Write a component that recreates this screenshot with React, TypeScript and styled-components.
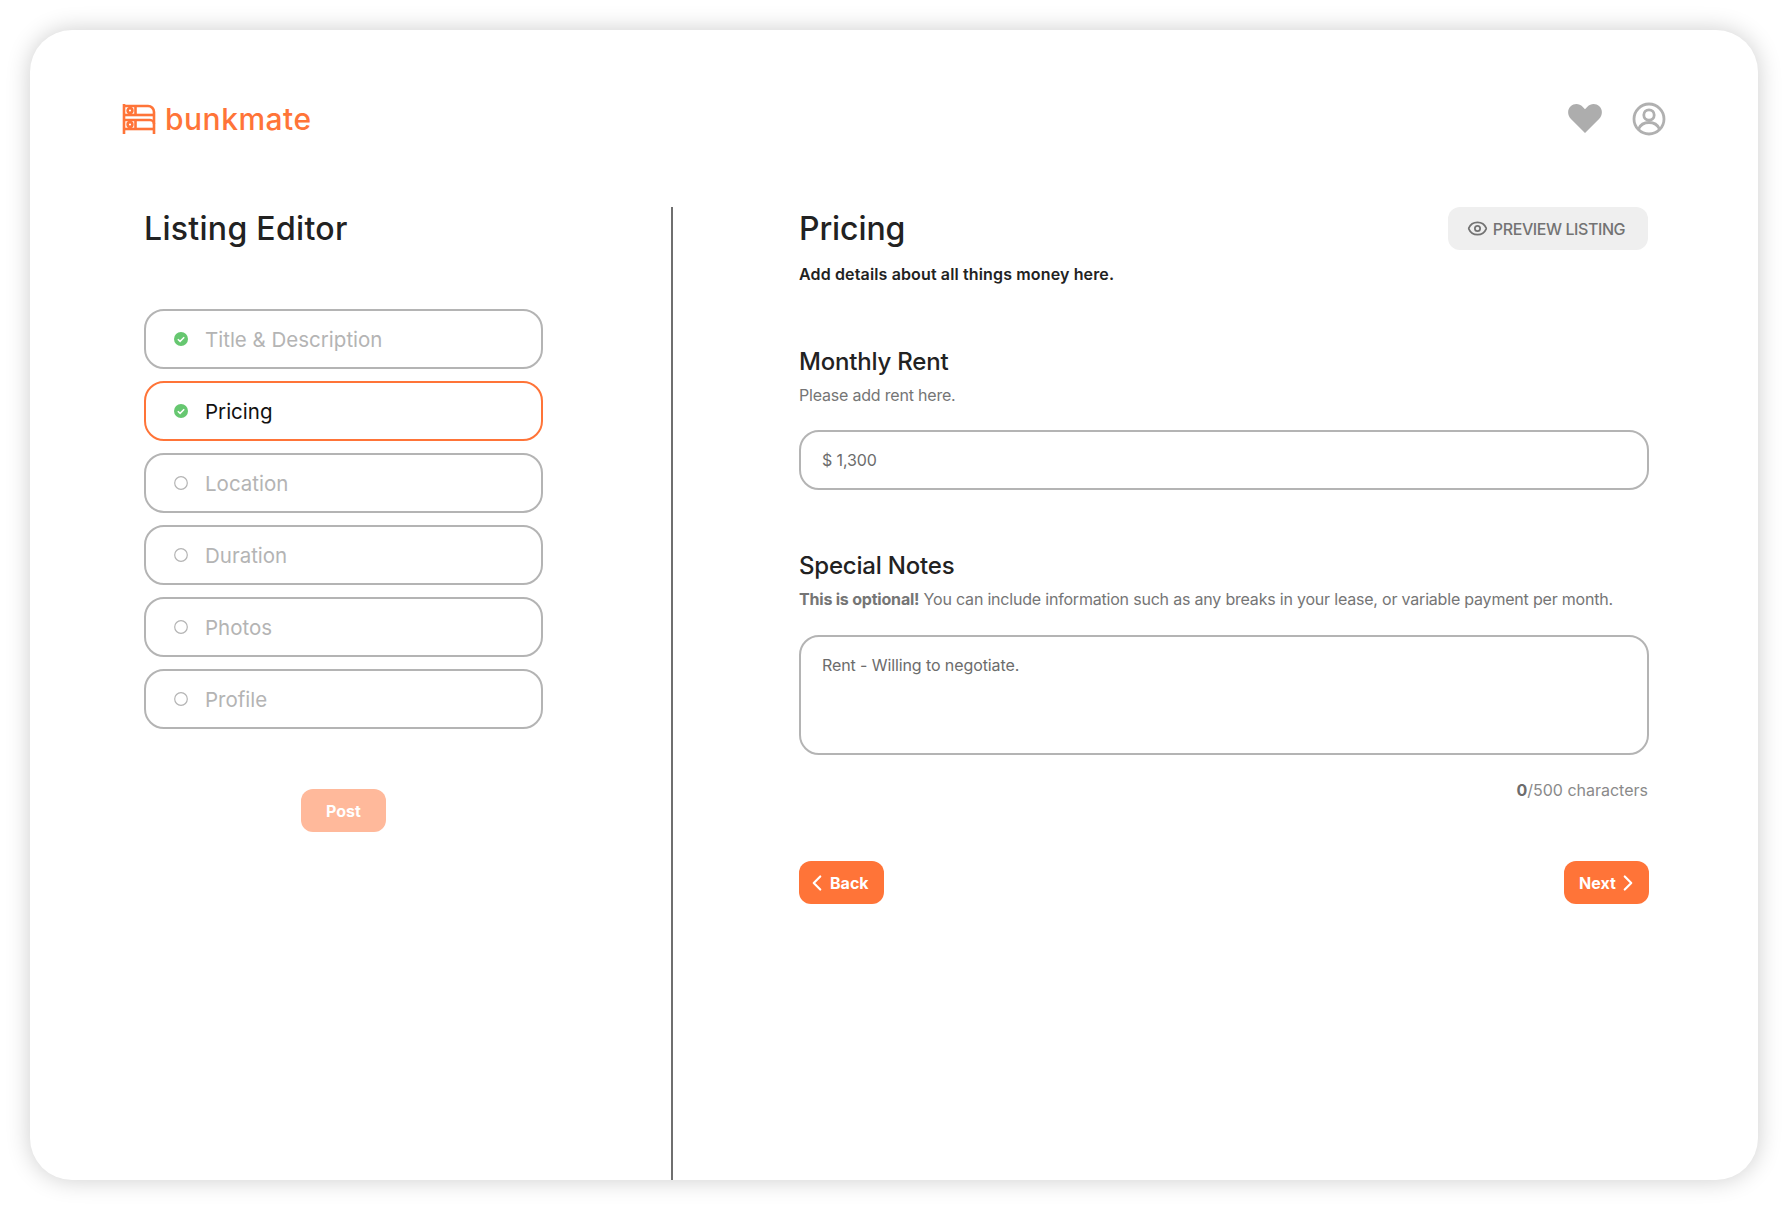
import styled, { createGlobalStyle } from "styled-components";
import { ChevronLeft, ChevronRight, Eye } from "lucide-react";

const FONT = `"Inter", "Noto Sans", sans-serif`;
const ORANGE = "#ff7438";

const GlobalStyle = createGlobalStyle`
  html, body {
    margin: 0;
    padding: 0;
    background: #fff;
  }
  * {
    box-sizing: border-box;
  }
`;

const Page = styled.div`
  width: 1788px;
  height: 1210px;
  padding: 30px;
  font-family: ${FONT};
  background: #fff;
`;

const Card = styled.div`
  display: flex;
  flex-direction: column;
  width: 1728px;
  height: 1150px;
  border-radius: 42px;
  background: #fff;
  box-shadow: 0 0 24px rgba(0, 0, 0, 0.2);
`;

const Header = styled.header`
  display: flex;
  align-items: center;
  justify-content: space-between;
  height: 177px;
  flex-shrink: 0;
  padding: 0 92px;
`;

const Logo = styled.div`
  display: flex;
  align-items: center;
  gap: 9px;
  color: ${ORANGE};
  font-size: 30px;
  font-weight: 500;
  letter-spacing: 0.5px;
`;

const HeaderIcons = styled.div`
  display: flex;
  align-items: center;
  gap: 30px;
`;

const Main = styled.main`
  display: flex;
  flex: 1;
  min-height: 0;
`;

const Sidebar = styled.aside`
  width: 643px;
  flex-shrink: 0;
  padding: 0 128px 0 114px;
  border-right: 2px solid #6f6f6f;
`;

const Title = styled.h1`
  margin: 0;
  height: 43px;
  font-size: 32px;
  line-height: 43px;
  font-weight: 500;
  letter-spacing: -0.1px;
  color: #222;
`;

const SidebarTitle = styled(Title)`
  letter-spacing: 0.3px;
`;

const Steps = styled.div`
  display: flex;
  flex-direction: column;
  gap: 12px;
  margin-top: 59px;
`;

const Step = styled.div<{ $active?: boolean }>`
  display: flex;
  align-items: center;
  gap: 17px;
  height: 60px;
  padding: 0 28px;
  border: 2px solid ${({ $active }) => ($active ? ORANGE : "#b4b4b4")};
  border-radius: 20px;
  font-size: 20.5px;
  color: ${({ $active }) => ($active ? "#111" : "#b4b4b4")};
`;

const PostRow = styled.div`
  display: flex;
  justify-content: center;
  margin-top: 60px;
`;

const Button = styled.button<{ $faded?: boolean; $pad?: string }>`
  display: flex;
  align-items: center;
  justify-content: ${({ $pad }) => ($pad ? "flex-start" : "center")};
  width: 85px;
  height: 43px;
  padding: ${({ $pad }) => $pad ?? "0"};
  border: none;
  border-radius: 12px;
  background: ${({ $faded }) => ($faded ? "#ffb99b" : ORANGE)};
  color: #fff;
  font-family: ${FONT};
  font-size: 16px;
  font-weight: 700;

  svg {
    flex-shrink: 0;
  }
`;

const NextChevron = styled(ChevronRight)`
  margin-left: -1px;
`;

const Content = styled.section`
  flex: 1;
  padding: 0 109px 0 126px;
`;

const TitleRow = styled.div`
  display: flex;
  align-items: center;
  justify-content: space-between;
  height: 43px;
`;

const PreviewButton = styled.button`
  display: flex;
  align-items: center;
  justify-content: center;
  gap: 5px;
  width: 200px;
  height: 43px;
  margin-right: 1px;
  padding: 0 4px 0 0;
  border: none;
  border-radius: 12px;
  background: #efefef;
  color: #737373;
  font-family: ${FONT};
  font-size: 16px;
  font-weight: 500;
  letter-spacing: -0.42px;
`;

const Subtitle = styled.p`
  margin: 13px 0 0;
  font-size: 16px;
  line-height: 22px;
  font-weight: 600;
  letter-spacing: 0.14px;
  color: #222;
`;

const SectionTitle = styled.h2<{ $top: number }>`
  margin: ${({ $top }) => $top}px 0 0;
  font-size: 24px;
  line-height: 32px;
  font-weight: 500;
  letter-spacing: -0.2px;
  color: #222;
`;

const Hint = styled.p`
  margin: 7px 0 0;
  font-size: 16px;
  line-height: 20px;
  letter-spacing: -0.2px;
  color: #757575;

  b {
    font-weight: 700;
  }
`;

const Field = styled.div<{ $tall?: boolean }>`
  display: flex;
  align-items: ${({ $tall }) => ($tall ? "flex-start" : "center")};
  height: ${({ $tall }) => ($tall ? "120px" : "60px")};
  margin-top: ${({ $tall }) => ($tall ? "26px" : "25px")};
  padding: ${({ $tall }) => ($tall ? "17px 21px 0" : "0 21px")};
  border: 2px solid #b4b4b4;
  border-radius: 20px;
  font-size: 16px;
  line-height: 22px;
  letter-spacing: -0.1px;
  color: #6c6c6c;
`;

const Count = styled.div`
  margin-top: 25px;
  padding-right: 1px;
  text-align: right;
  font-size: 16px;
  line-height: 20px;
  color: #8a8a8a;

  b {
    color: #6c6c6c;
    font-weight: 700;
  }
`;

const Actions = styled.div`
  display: flex;
  justify-content: space-between;
  margin-top: 61px;
`;

function BunkIcon() {
  return (
    <svg width="34" height="32" viewBox="0 0 34 32" fill="none" stroke={ORANGE} strokeWidth="2.600">
      <path d="M2 1v30" />
      <path d="M32 9v22" />
      <path d="M2 3H26a6 6 0 0 1 6 6" />
      <path d="M2 12H32" />
      <path d="M2 17H28a4 4 0 0 1 4 4" />
      <path d="M2 26H32" />
      <path d="M13.500 3v9" />
      <path d="M13.500 17v9" />
      <circle cx="8" cy="7.500" r="2.400" />
      <circle cx="8" cy="21.500" r="2.400" />
    </svg>
  );
}

function HeartIcon() {
  return (
    <svg width="34" height="29" viewBox="0 0 35 30" fill="#adadad">
      <path d="M17.500 30 3 15.500C-1 11.500-.8 5.500 2.700 2.300 6.300-.9 11.800-.6 15 2.800l2.500 2.700L20 2.800c3.200-3.400 8.700-3.700 12.300-.5 3.500 3.200 3.700 9.200-.3 13.200L17.500 30Z" />
    </svg>
  );
}

function UserIcon() {
  return (
    <svg width="34" height="34" viewBox="0 0 34 34" fill="none" stroke="#b0b0b0" strokeWidth="2.800">
      <circle cx="17" cy="17" r="15" />
      <circle cx="17" cy="13" r="5.200" />
      <path d="M6.500 27c2-4.500 6-6.500 10.500-6.500S25.500 22.500 27.500 27" />
    </svg>
  );
}

function StepIcon({ done }: { done?: boolean }) {
  if (!done) {
    return (
      <svg width="14" height="14" viewBox="0 0 14 14" fill="none" stroke="#b4b4b4" strokeWidth="1.200">
        <circle cx="7" cy="7" r="6.300" />
      </svg>
    );
  }
  return (
    <svg width="14" height="14" viewBox="0 0 14 14" fill="none">
      <circle cx="7" cy="7" r="7" fill="#66c770" />
      <path d="M3.800 7.200 6.100 9.400 10.200 5.300" stroke="#fff" strokeWidth="1.500" />
    </svg>
  );
}

const steps = [
  { label: "Title & Description", done: true },
  { label: "Pricing", done: true, active: true },
  { label: "Location" },
  { label: "Duration" },
  { label: "Photos" },
  { label: "Profile" },
];

export default function App() {
  return (
    <Page>
      <GlobalStyle />
      <Card>
        <Header>
          <Logo>
            <BunkIcon />
            bunkmate
          </Logo>
          <HeaderIcons>
            <HeartIcon />
            <UserIcon />
          </HeaderIcons>
        </Header>
        <Main>
          <Sidebar>
            <SidebarTitle>Listing Editor</SidebarTitle>
            <Steps>
              {steps.map((step) => (
                <Step key={step.label} $active={step.active}>
                  <StepIcon done={step.done} />
                  {step.label}
                </Step>
              ))}
            </Steps>
            <PostRow>
              <Button $faded>Post</Button>
            </PostRow>
          </Sidebar>
          <Content>
            <TitleRow>
              <Title>Pricing</Title>
              <PreviewButton>
                <Eye size={21} strokeWidth={2} />
                PREVIEW LISTING
              </PreviewButton>
            </TitleRow>
            <Subtitle>Add details about all things money here.</Subtitle>
            <SectionTitle $top={61}>Monthly Rent</SectionTitle>
            <Hint>Please add rent here.</Hint>
            <Field>$ 1,300</Field>
            <SectionTitle $top={60}>Special Notes</SectionTitle>
            <Hint>
              <b>This is optional!</b> You can include information such as any breaks in your lease, or variable
              payment per month.
            </Hint>
            <Field $tall>Rent - Willing to negotiate.</Field>
            <Count>
              <b>0</b>/500 characters
            </Count>
            <Actions>
              <Button $pad="0 0 0 5px">
                <ChevronLeft size={26} strokeWidth={2} />
                Back
              </Button>
              <Button $pad="0 0 0 15px">
                Next
                <NextChevron size={26} strokeWidth={2} />
              </Button>
            </Actions>
          </Content>
        </Main>
      </Card>
    </Page>
  );
}
